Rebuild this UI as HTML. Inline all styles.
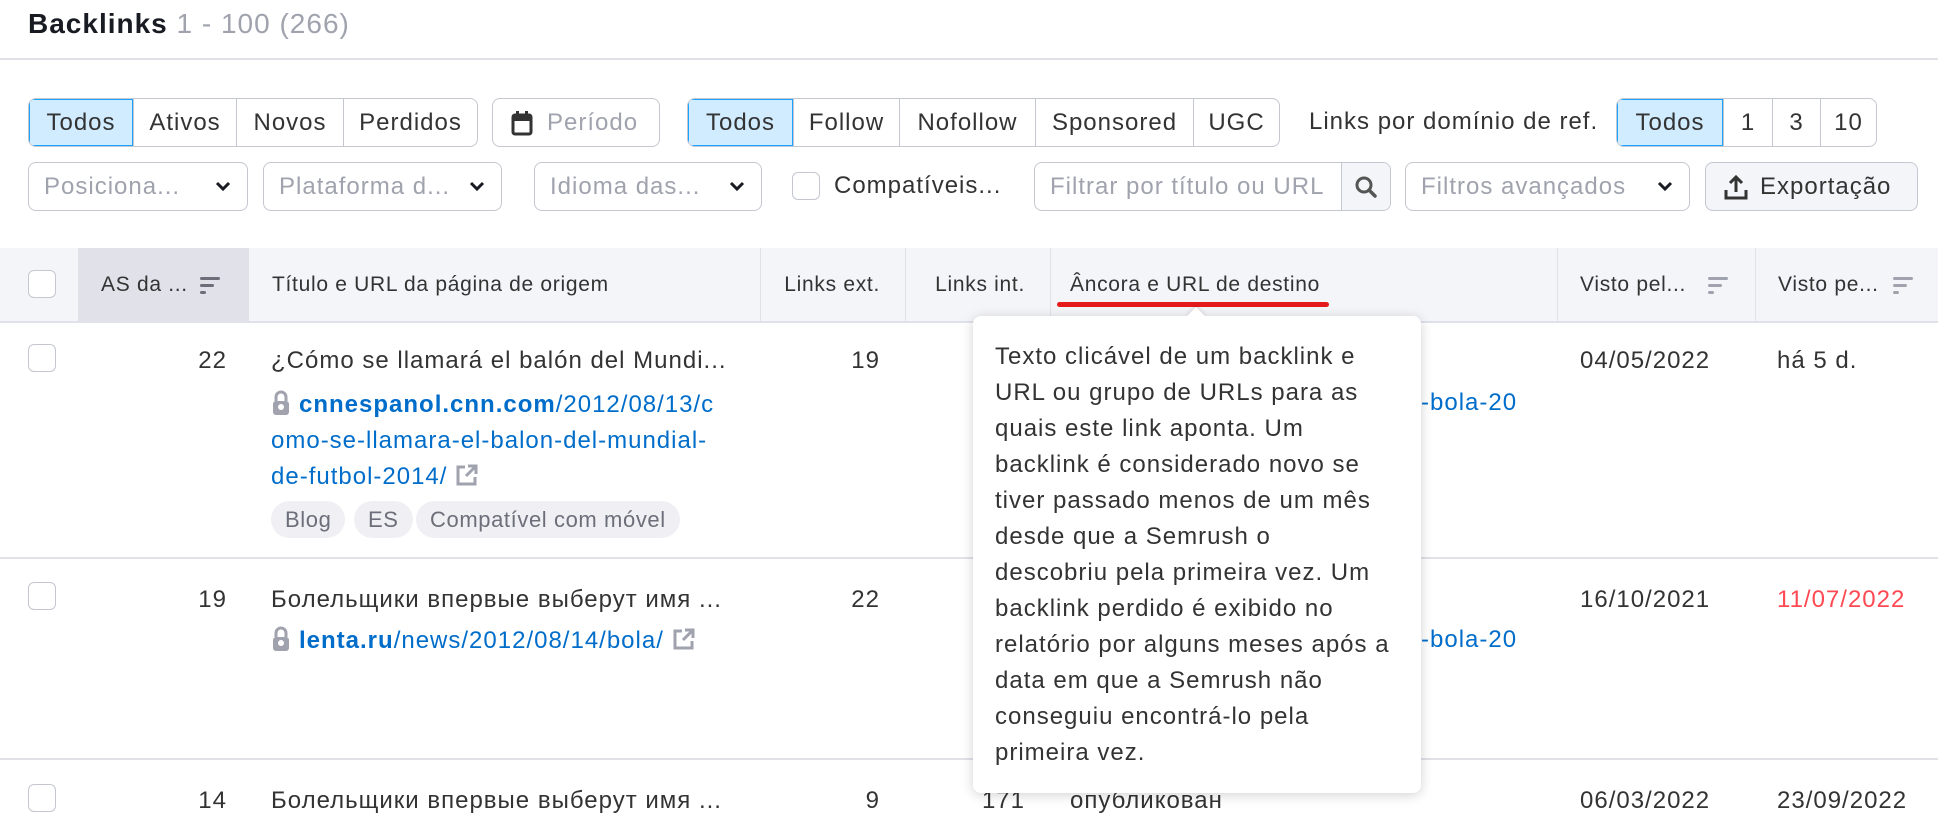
<!DOCTYPE html>
<html><head><meta charset="utf-8"><style>
*{box-sizing:border-box;margin:0;padding:0}
body{width:1938px;height:828px;overflow:hidden;background:#fff;font-family:"Liberation Sans",Arial,sans-serif;color:#333;font-size:24px;letter-spacing:1px;position:relative}
.a{position:absolute;white-space:nowrap}
.grp{position:absolute;display:flex;height:49px;border:1px solid #c4c7cf;border-radius:8px;overflow:hidden}
.grp div{display:flex;align-items:center;justify-content:center;border-left:1px solid #c4c7cf;color:#333}
.grp div:first-child{border-left:none}
.grp .on{background:#d1ecff;box-shadow:inset 0 0 0 1px #1aa3ff;color:#333}
.box{position:absolute;height:49px;border:1px solid #c4c7cf;border-radius:8px;display:flex;align-items:center;padding-left:15px;color:#a0a3ad}
.chev{position:absolute;right:16px;top:17px}
.cb{position:absolute;width:28px;height:28px;border:1px solid #c4c7cf;border-radius:6px;background:#fff}
.hd{position:absolute;top:248px;height:73px;font-size:21px;letter-spacing:0.7px;color:#333;display:flex;align-items:center}
.vl{position:absolute;top:248px;width:1px;height:73px;background:#e0e1e9}
.hl{position:absolute;left:0;width:1938px;height:2px;background:#e0e1e9}
.lnk{color:#006dca}
.tag{position:absolute;height:37px;border-radius:19px;background:#f0f0f4;color:#6c6e79;font-size:22px;letter-spacing:0.6px;display:flex;align-items:center;padding:0 14px}
.tt{position:absolute;left:973px;top:316px;width:448px;height:477px;background:#fff;border-radius:8px;box-shadow:0 2px 12px rgba(0,0,0,.18);padding:23px 22px;font-size:24px;line-height:36px;color:#333}
</style></head><body>

<div class="a" style="left:28px;top:8px;font-size:28px;font-weight:bold;color:#191b23">Backlinks <span style="font-weight:normal;color:#a0a3ad">1 - 100 (266)</span></div>
<div class="hl" style="top:58px"></div>

<div class="grp" style="left:28px;top:98px;width:450px">
<div class="on" style="width:104px">Todos</div><div style="width:103px">Ativos</div><div style="width:107px">Novos</div><div style="flex:1">Perdidos</div></div>
<div class="box" style="left:492px;top:98px;width:168px;padding-left:18px;color:#a0a3ad">
<svg width="22" height="26" viewBox="0 0 22 26" style="margin-right:14px"><rect x="2" y="5" width="18" height="19" rx="2" fill="none" stroke="#333" stroke-width="3"/><rect x="2" y="5" width="18" height="6" fill="#333"/><rect x="5" y="1" width="3" height="6" fill="#333"/><rect x="14" y="1" width="3" height="6" fill="#333"/></svg>Período</div>

<div class="grp" style="left:687px;top:98px;width:593px">
<div class="on" style="width:105px">Todos</div><div style="width:106px">Follow</div><div style="width:136px">Nofollow</div><div style="width:158px">Sponsored</div><div style="flex:1">UGC</div></div>
<div class="a" style="left:1309px;top:108px">Links por domínio de ref.</div>
<div class="grp" style="left:1616px;top:98px;width:261px">
<div class="on" style="width:106px">Todos</div><div style="width:49px">1</div><div style="width:48px">3</div><div style="flex:1">10</div></div>

<div class="box" style="left:28px;top:162px;width:220px">Posiciona...<svg class="chev" width="16" height="12" viewBox="0 0 16 12"><path d="M2 3l6 6 6-6" fill="none" stroke="#191b23" stroke-width="3"/></svg></div>
<div class="box" style="left:263px;top:162px;width:239px">Plataforma d...<svg class="chev" width="16" height="12" viewBox="0 0 16 12"><path d="M2 3l6 6 6-6" fill="none" stroke="#191b23" stroke-width="3"/></svg></div>
<div class="box" style="left:534px;top:162px;width:228px">Idioma das...<svg class="chev" width="16" height="12" viewBox="0 0 16 12"><path d="M2 3l6 6 6-6" fill="none" stroke="#191b23" stroke-width="3"/></svg></div>
<div class="cb" style="left:792px;top:172px"></div>
<div class="a" style="left:834px;top:172px">Compatíveis...</div>
<div class="box" style="left:1034px;top:162px;width:357px;overflow:hidden">Filtrar por título ou URL
<div style="position:absolute;right:0;top:0;width:49px;height:47px;background:#f4f5f9;border-left:1px solid #c4c7cf;display:flex;align-items:center;justify-content:center"><svg width="24" height="24" viewBox="0 0 24 24"><circle cx="10" cy="10" r="7" fill="none" stroke="#555" stroke-width="3"/><path d="M15 15l6 6" stroke="#555" stroke-width="3.5" stroke-linecap="round"/></svg></div></div>
<div class="box" style="left:1405px;top:162px;width:285px">Filtros avançados<svg class="chev" width="16" height="12" viewBox="0 0 16 12"><path d="M2 3l6 6 6-6" fill="none" stroke="#191b23" stroke-width="3"/></svg></div>
<div class="box" style="left:1705px;top:162px;width:213px;background:#f4f5f9;color:#333;padding-left:18px">
<svg width="24" height="26" viewBox="0 0 24 26" style="margin-right:12px"><path d="M12 18V3M6 9l6-6 6 6" fill="none" stroke="#333" stroke-width="3"/><path d="M2 16v8h20v-8" fill="none" stroke="#333" stroke-width="3"/></svg>Exportação</div>

<!-- header -->
<div style="position:absolute;left:0;top:248px;width:1938px;height:73px;background:#f4f5f9"></div>
<div style="position:absolute;left:78px;top:248px;width:170px;height:73px;background:#e0e1e9"></div>
<div class="hl" style="top:321px"></div>
<div class="cb" style="left:28px;top:270px"></div>
<div class="hd" style="left:101px">AS da ...</div>
<svg class="a" style="left:200px;top:275px" width="20" height="20" viewBox="0 0 20 20"><rect x="0" y="2" width="20" height="3" rx="1.5" fill="#6c6e79"/><rect x="0" y="9" width="14" height="3" rx="1.5" fill="#6c6e79"/><rect x="0" y="16" width="6" height="3" rx="1.5" fill="#6c6e79"/></svg>
<div class="vl" style="left:248px"></div>
<div class="hd" style="left:272px">Título e URL da página de origem</div>
<div class="vl" style="left:760px"></div>
<div class="hd" style="left:760px;width:120px;justify-content:flex-end">Links ext.</div>
<div class="vl" style="left:905px"></div>
<div class="hd" style="left:905px;width:120px;justify-content:flex-end">Links int.</div>
<div class="vl" style="left:1050px"></div>
<div class="hd" style="left:1070px">Âncora e URL de destino</div>
<div class="a" style="left:1057px;top:302px;width:272px;height:5px;border-radius:3px;background:#e51b1b"></div>
<div class="vl" style="left:1557px"></div>
<div class="hd" style="left:1580px">Visto pel...</div>
<svg class="a" style="left:1708px;top:275px" width="20" height="20" viewBox="0 0 20 20"><rect x="0" y="2" width="20" height="3" rx="1.5" fill="#a0a3ad"/><rect x="0" y="9" width="14" height="3" rx="1.5" fill="#a0a3ad"/><rect x="0" y="16" width="6" height="3" rx="1.5" fill="#a0a3ad"/></svg>
<div class="vl" style="left:1755px"></div>
<div class="hd" style="left:1778px">Visto pe...</div>
<svg class="a" style="left:1893px;top:275px" width="20" height="20" viewBox="0 0 20 20"><rect x="0" y="2" width="20" height="3" rx="1.5" fill="#a0a3ad"/><rect x="0" y="9" width="14" height="3" rx="1.5" fill="#a0a3ad"/><rect x="0" y="16" width="6" height="3" rx="1.5" fill="#a0a3ad"/></svg>

<!-- row 1 -->
<div class="cb" style="left:28px;top:344px"></div>
<div class="a" style="left:150px;width:77px;text-align:right;top:347px">22</div>
<div class="a" style="left:271px;top:347px">¿Cómo se llamará el balón del Mundi...</div>
<div class="a lnk" style="left:271px;top:387px;line-height:36px;white-space:normal;width:480px">
<svg width="20" height="26" viewBox="0 0 20 26" style="vertical-align:-4px;margin-right:8px"><path d="M5 11V7a5 5 0 0110 0v4" fill="none" stroke="#a0a3ad" stroke-width="3"/><rect x="2" y="11" width="16" height="14" rx="3" fill="#a0a3ad"/><circle cx="10" cy="17" r="3" fill="#fff"/></svg><b style="font-weight:bold">cnnespanol.cnn.com</b>/2012/08/13/c<br>omo-se-llamara-el-balon-del-mundial-<br>de-futbol-2014/ <svg width="24" height="24" viewBox="0 0 24 24" style="vertical-align:-3px"><path d="M10 4H3v17h17v-7" fill="none" stroke="#a0a3ad" stroke-width="3"/><path d="M13 3h8v8M21 3L11 13" fill="none" stroke="#a0a3ad" stroke-width="3"/></svg></div>
<div class="tag" style="left:271px;top:501px">Blog</div>
<div class="tag" style="left:354px;top:501px">ES</div>
<div class="tag" style="left:416px;top:501px">Compatível com móvel</div>
<div class="a" style="left:760px;width:120px;text-align:right;top:347px">19</div>
<div class="a lnk" style="left:1421px;top:389px">-bola-20</div>
<div class="a" style="left:1580px;top:347px">04/05/2022</div>
<div class="a" style="left:1777px;top:347px">há 5 d.</div>
<div class="hl" style="top:557px"></div>

<!-- row 2 -->
<div class="cb" style="left:28px;top:582px"></div>
<div class="a" style="left:150px;width:77px;text-align:right;top:586px">19</div>
<div class="a" style="left:271px;top:586px">Болельщики впервые выберут имя ...</div>
<div class="a lnk" style="left:271px;top:626px"><svg width="20" height="26" viewBox="0 0 20 26" style="vertical-align:-4px;margin-right:8px"><path d="M5 11V7a5 5 0 0110 0v4" fill="none" stroke="#a0a3ad" stroke-width="3"/><rect x="2" y="11" width="16" height="14" rx="3" fill="#a0a3ad"/><circle cx="10" cy="17" r="3" fill="#fff"/></svg><b>lenta.ru</b>/news/2012/08/14/bola/ <svg width="24" height="24" viewBox="0 0 24 24" style="vertical-align:-3px"><path d="M10 4H3v17h17v-7" fill="none" stroke="#a0a3ad" stroke-width="3"/><path d="M13 3h8v8M21 3L11 13" fill="none" stroke="#a0a3ad" stroke-width="3"/></svg></div>
<div class="a" style="left:760px;width:120px;text-align:right;top:586px">22</div>
<div class="a lnk" style="left:1421px;top:626px">-bola-20</div>
<div class="a" style="left:1580px;top:586px">16/10/2021</div>
<div class="a" style="left:1777px;top:586px;color:#ff4953">11/07/2022</div>
<div class="hl" style="top:758px"></div>

<!-- row 3 -->
<div class="cb" style="left:28px;top:784px"></div>
<div class="a" style="left:150px;width:77px;text-align:right;top:787px">14</div>
<div class="a" style="left:271px;top:787px">Болельщики впервые выберут имя ...</div>
<div class="a" style="left:760px;width:120px;text-align:right;top:787px">9</div>
<div class="a" style="left:905px;width:120px;text-align:right;top:787px">171</div>
<div class="a" style="left:1070px;top:787px">опубликован</div>
<div class="a" style="left:1580px;top:787px">06/03/2022</div>
<div class="a" style="left:1777px;top:787px">23/09/2022</div>

<!-- tooltip -->
<div class="tt">Texto clicável de um backlink e<br>URL ou grupo de URLs para as<br>quais este link aponta. Um<br>backlink é considerado novo se<br>tiver passado menos de um mês<br>desde que a Semrush o<br>descobriu pela primeira vez. Um<br>backlink perdido é exibido no<br>relatório por alguns meses após a<br>data em que a Semrush não<br>conseguiu encontrá-lo pela<br>primeira vez.</div>
<div class="a" style="left:1189px;top:310px;width:14px;height:14px;background:#fff;transform:rotate(45deg);box-shadow:-2px -2px 3px rgba(0,0,0,.08)"></div>
</body></html>
